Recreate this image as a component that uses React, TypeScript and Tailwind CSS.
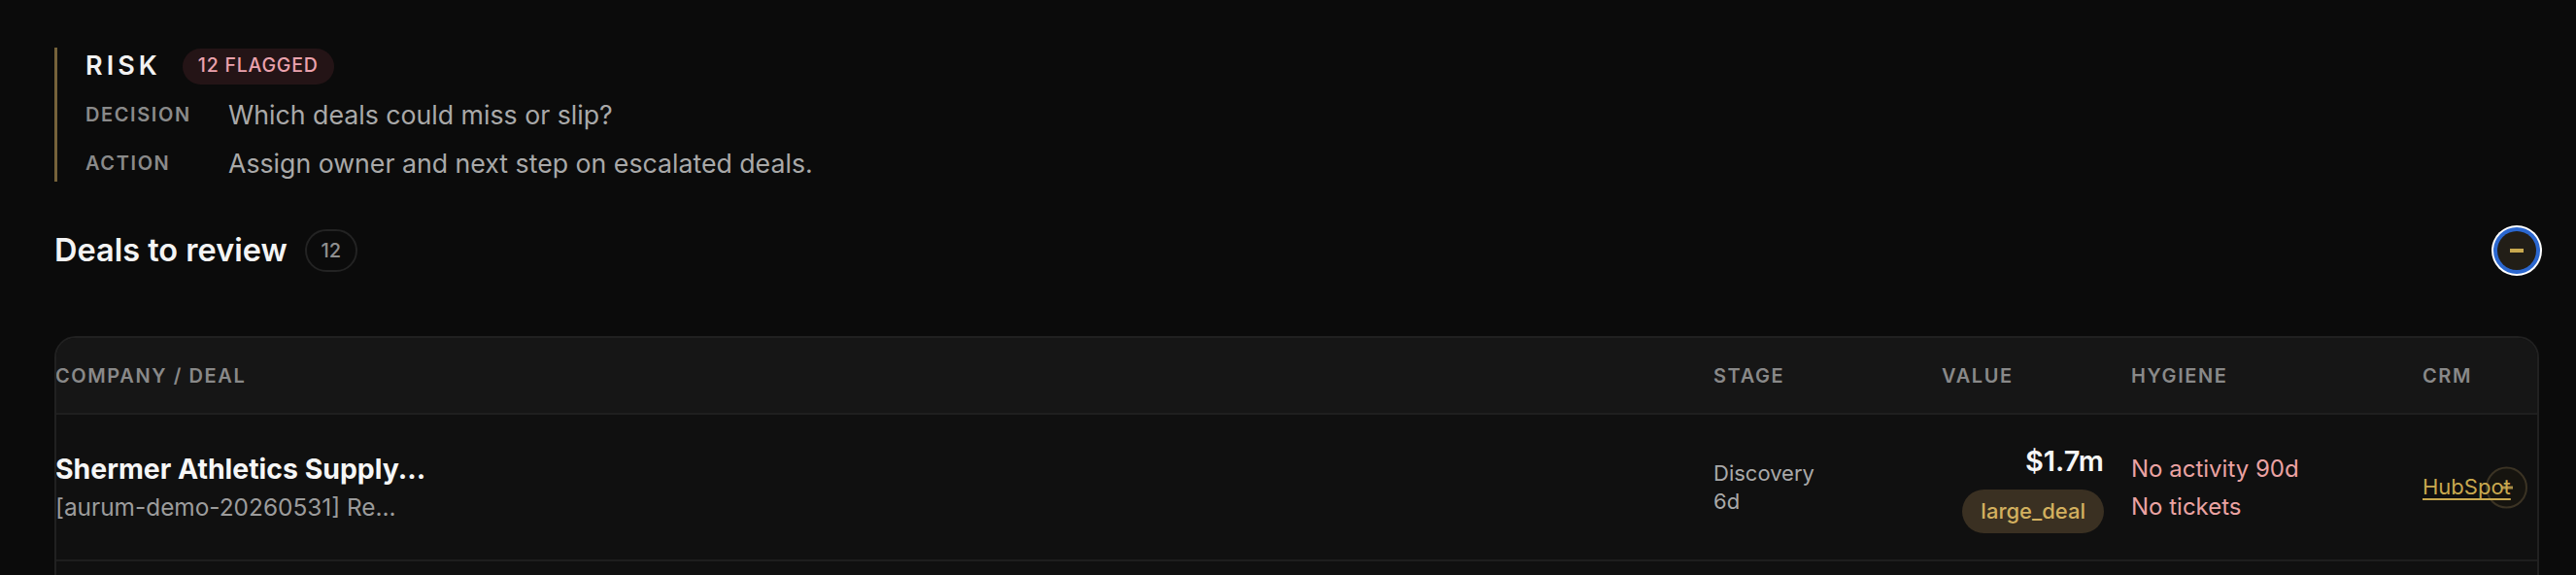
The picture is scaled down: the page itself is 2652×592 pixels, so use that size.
import React from 'react';

type Deal = {
  name: string;
  sub: string;
  stage: string;
  age: string;
  value: string;
  tag: string;
  hygiene: string[];
  crm: string;
};

const DEALS: Deal[] = [
  {
    name: 'Shermer Athletics Supply...',
    sub: '[aurum-demo-20260531] Re...',
    stage: 'Discovery',
    age: '6d',
    value: '$1.7m',
    tag: 'large_deal',
    hygiene: ['No activity 90d', 'No tickets'],
    crm: 'HubSpot',
  },
];

const COLS = 'grid grid-cols-[1fr_235px_195px_300px_118px]';

const MetaRow: React.FC<{ label: string; text: string }> = ({ label, text }) => (
  <div className="flex items-center h-[38px]">
    <span className="w-[147px] text-[20px] font-semibold tracking-[0.08em] text-[#8a8a8a]">{label}</span>
    <span className="text-[26.7px] text-[#a9a9a9]">{text}</span>
  </div>
);

const App: React.FC = () => {
  return (
    <div className="h-[592px] overflow-hidden bg-[#0b0b0b] pl-[56px] pr-[38px] pt-[49px] font-[family-name:Inter,sans-serif]">
      {/* risk summary */}
      <div className="flex flex-col gap-[12px] border-l-[3px] border-[#75623a] pl-[29px]">
        <div className="flex items-center h-[38px] gap-[22px]">
          <span className="text-[27px] font-semibold tracking-[0.15em] text-[#f2f2f2]">RISK</span>
          <span className="h-[37px] px-[16px] flex items-center rounded-full bg-[#241416] text-[19.5px] font-medium tracking-[0.04em] text-[#eba2ad]">
            12 FLAGGED
          </span>
        </div>
        <MetaRow label="DECISION" text="Which deals could miss or slip?" />
        <MetaRow label="ACTION" text="Assign owner and next step on escalated deals." />
      </div>

      {/* section header */}
      <div className="mt-[45px] h-[52px] flex items-center justify-between">
        <div className="flex items-center gap-[18px]">
          <h2 className="text-[32.5px] font-semibold text-[#f4f4f4]">Deals to review</h2>
          <span className="w-[54px] h-[44px] flex items-center justify-center rounded-full border-2 border-[#232323] text-[20px] font-medium text-[#8f8f8f]">
            12
          </span>
        </div>
        <button className="mr-[3px] w-[40px] h-[40px] rounded-full bg-[#221e17] flex items-center justify-center shadow-[0_0_0_4px_#2b67cf,0_0_0_6px_#ffffff]">
          <span className="block w-[14px] h-[4px] bg-[#c9a94f]" />
        </button>
      </div>

      {/* table */}
      <div className="mt-[62px] min-h-[300px] rounded-[22px] border-2 border-[#212121] bg-[#101010] overflow-hidden">
        <div className={`${COLS} h-[79px] items-center bg-[#161616] border-b-2 border-[#1f1f1f] text-[20px] font-semibold tracking-[0.08em] text-[#898989]`}>
          <div className="-ml-[1px]">COMPANY / DEAL</div>
          <div>STAGE</div>
          <div>VALUE</div>
          <div>HYGIENE</div>
          <div>CRM</div>
        </div>
        {DEALS.map((d, i) => (
          <div key={i} className={`${COLS} h-[151px] items-center bg-[#101010] border-b-2 border-[#1e1e1e]`}>
            <div className="-ml-[1px] flex flex-col">
              <span className="text-[28.4px] leading-[40px] font-bold text-[#f6f6f6]">{d.name}</span>
              <span className="text-[24.4px] leading-[38px] text-[#9c9c9c]">{d.sub}</span>
            </div>
            <div className="flex flex-col text-[22px] leading-[29px] text-[#a9a9a9]">
              <span>{d.stage}</span>
              <span>{d.age}</span>
            </div>
            <div className="flex flex-col items-end pr-[28px] gap-[11px] pt-[2px]">
              <span className="text-[29px] leading-[36px] font-semibold text-[#f6f6f6]">{d.value}</span>
              <span className="h-[45px] px-[19px] flex items-center rounded-full bg-[#3a3022] text-[22px] font-medium text-[#d3b05f]">
                {d.tag}
              </span>
            </div>
            <div className="flex flex-col text-[24px] leading-[39px] text-[#eba3a3]">
              {d.hygiene.map((h) => (
                <span key={h}>{h}</span>
              ))}
            </div>
            <div className="relative flex items-center h-full">
              <span className="absolute right-[10px] top-1/2 -translate-y-1/2 w-[43px] h-[43px] rounded-full border-2 border-[#3b3324] bg-[#16140f] flex items-center justify-center">
                <span className="block w-[12px] h-[3px] bg-[#a88c45]" />
              </span>
              <a className="relative text-[22px] text-[#c9a94f] underline underline-offset-[4px] decoration-2">
                {d.crm}
              </a>
            </div>
          </div>
        ))}
      </div>
    </div>
  );
};

export default App;
